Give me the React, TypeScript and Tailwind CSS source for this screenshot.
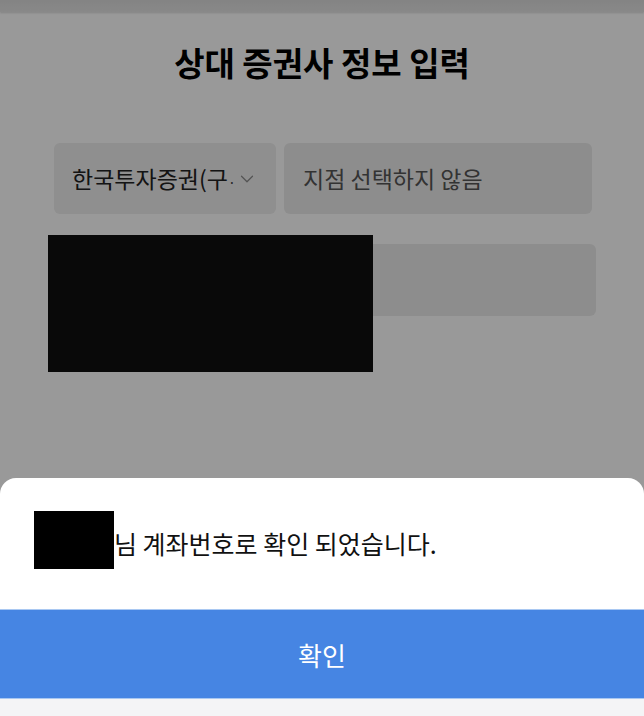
import React from 'react'
import { ChevronDown } from 'lucide-react'

const font = { fontFamily: '"Noto Sans CJK KR", "Noto Sans", sans-serif' }

function BrokerForm() {
  return (
    <div className="flex flex-col">
      <div className="h-[12px] bg-gradient-to-b from-[#dcdcdc] to-[#e4e4e4] shadow-[0_1px_2px_rgba(0,0,0,0.15)]" />
      <h1 className="mt-[29px] text-center text-[33px] font-bold leading-[42px] text-black">
        상대 증권사 정보 입력
      </h1>
      <div className="mt-[60px] flex gap-2 pl-[54px] pr-[52px]">
        <button className="flex h-[71px] w-[222px] items-center rounded-md bg-[#eeeeee] pl-[18px] pr-[18px]">
          <span className="shrink-0 whitespace-nowrap text-left text-[23px] text-[#222]">
            한국투자증권(구<span className="text-[14px] text-[#444]">·</span>
          </span>
          <ChevronDown className="ml-auto h-[22px] w-[22px] shrink-0 text-[#8a8a8a]" strokeWidth={1.3} />
        </button>
        <div className="flex h-[71px] flex-1 items-center rounded-md bg-[#ececec] pl-[19px] text-[23px] text-[#555]">
          지점 선택하지 않음
        </div>
      </div>
      <div className="mt-[30px] pl-[54px] pr-[48px]">
        <div className="h-[72px] rounded-md bg-[#ececec]" />
      </div>
    </div>
  )
}

function ConfirmSheet() {
  return (
    <div className="absolute inset-x-0 bottom-0 overflow-hidden rounded-t-2xl bg-white">
      <div className="flex h-[131px] items-center pb-[8px] pl-[34px]">
        <div className="h-[58px] w-[80px] bg-black" />
        <span className="mt-[8px] text-[25px] text-[#111]">님 계좌번호로 확인 되었습니다.</span>
      </div>
      <button className="flex h-[90px] w-full items-center justify-center border-y border-[#a9c8f2] bg-[#4685e3] text-[26px] text-white">
        확인
      </button>
      <div className="h-[17px] bg-[#f4f4f6]" />
    </div>
  )
}

export default function App() {
  return (
    <div className="relative h-[716px] w-full overflow-hidden bg-white" style={font}>
      <BrokerForm />
      {/* redacted block over the account field */}
      <div className="absolute left-[48px] top-[235px] h-[137px] w-[325px] bg-[#0f0f0f]" />
      <div className="absolute inset-0 bg-black/40" />
      <ConfirmSheet />
    </div>
  )
}
